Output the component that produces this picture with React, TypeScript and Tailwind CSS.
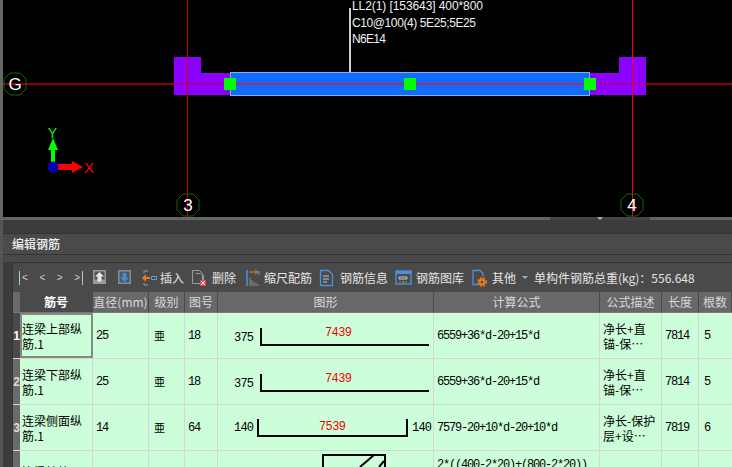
const cjk = "font-['Noto_Sans_CJK_SC',sans-serif]";
const mono = "font-['Liberation_Mono','Noto_Sans_CJK_SC',monospace] text-xs tracking-[-1.2px]";

const columns = "grid grid-cols-[7px_73px_56px_36px_33px_216px_166px_62px_37px_1fr]";

function Bubble({ x, y, label }: { x: number; y: number; label: string }) {
  return (
    <g>
      <polygon
        points={`${x - 5},${y - 11} ${x + 5},${y - 11} ${x + 11},${y - 5} ${x + 11},${y + 5} ${x + 5},${y + 11} ${x - 5},${y + 11} ${x - 11},${y + 5} ${x - 11},${y - 5}`}
        fill="none"
        stroke="#0a6a0a"
      />
      <text x={x} y={y + 6} textAnchor="middle" fill="#fff" fontSize="17" fontFamily="Liberation Sans">
        {label}
      </text>
    </g>
  );
}

function Canvas() {
  return (
    <div className="h-[217px] border-l-[3px] border-[#666] bg-black">
      <svg width="729" height="217" viewBox="3 0 729 217" className="block">
        <path d="M174 57h27v16h29v22h-56z" fill="#8c00ff" />
        <path d="M646 57h-27v16h-29v22h56z" fill="#8c00ff" />
        <rect x="230.5" y="72.5" width="359" height="23" fill="#0f6cff" stroke="#7eb0f5" />
        <line x1="3" y1="84" x2="174" y2="84" stroke="#8a0000" strokeWidth="2" />
        <line x1="646" y1="84" x2="732" y2="84" stroke="#8a0000" strokeWidth="2" />
        <line x1="174" y1="84" x2="230" y2="84" stroke="#a8009a" strokeWidth="2" />
        <line x1="590" y1="84" x2="646" y2="84" stroke="#a8009a" strokeWidth="2" />
        <line x1="230" y1="84" x2="590" y2="84" stroke="#b02a6a" strokeWidth="2" />
        <line x1="187.5" y1="0" x2="187.5" y2="217" stroke="#d00000" />
        <line x1="632.5" y1="0" x2="632.5" y2="217" stroke="#ff0000" />
        <rect x="224" y="78" width="12" height="12" fill="#00ff00" />
        <rect x="404" y="78" width="12" height="12" fill="#00ff00" />
        <rect x="584" y="78" width="12" height="12" fill="#00ff00" />
        <line x1="350" y1="8" x2="350" y2="72" stroke="#cfcfcf" strokeWidth="2" />
        <g fill="#f0f0f0" fontSize="12" fontFamily="Liberation Sans">
          <text x="352" y="10" textLength="131">LL2(1) [153643] 400*800</text>
          <text x="352" y="27" textLength="124">C10@100(4) 5E25;5E25</text>
          <text x="352" y="43" textLength="34">N6E14</text>
        </g>
        <Bubble x={15} y={84} label="G" />
        <Bubble x={188} y={205} label="3" />
        <Bubble x={632} y={205} label="4" />
        <path d="M51 162v-12h-3l5-12 5 12h-3v12z" fill="#00ff00" />
        <path d="M58 164h14v-3l11 6-11 6v-3h-14z" fill="#ff0000" />
        <circle cx="53" cy="167" r="5.5" fill="#0000b0" />
        <text x="52.5" y="138" textAnchor="middle" fill="#00ff00" fontSize="14" fontFamily="Liberation Sans">Y</text>
        <text x="89" y="173" textAnchor="middle" fill="#ff0000" fontSize="15" fontFamily="Liberation Sans">X</text>
      </svg>
    </div>
  );
}

function ToolIcon({ kind }: { kind: string }) {
  return (
    <svg width="18" height="18" viewBox="0 0 18 18" className="shrink-0">
      {kind === "up" && (
        <>
          <rect x="1" y="1" width="13" height="14" fill="#9a9a9a" />
          <rect x="2.5" y="2.5" width="10" height="8" fill="#555" />
          <path d="M7.5 3l4.5 4.5h-2.5v5h-4v-5h-2.500z" fill="#e8e8e8" />
        </>
      )}
      {kind === "down" && (
        <>
          <rect x="1" y="1" width="13" height="14" fill="#7c8ea3" />
          <rect x="2.5" y="2.500" width="10" height="11" fill="#555" />
          <path d="M7.500 13l-4.500-4.500h2.500v-4.500h4v4.500h2.500z" fill="#3f8ce0" />
        </>
      )}
      {kind === "insert" && (
        <>
          <path d="M3 2h4M3 16h4M3 2v2M3 14v2" stroke="#9a9a9a" fill="none" />
          <path d="M1 9l4-4v3h4v2h-4v3z" fill="#f07a1a" />
          <rect x="10.5" y="7.500" width="5" height="3" fill="none" stroke="#5a9be0" />
        </>
      )}
      {kind === "delete" && (
        <>
          <path d="M1.500 1.500h7l3 3v10h-10z" fill="none" stroke="#9a9a9a" />
          <path d="M4.500 4.500h5l3 2v5" fill="none" stroke="#9a9a9a" />
          <rect x="9" y="11" width="6" height="6" fill="#e04a4a" />
          <path d="M10 12l4 4M14 12l-4 4" stroke="#fff" />
        </>
      )}
      {kind === "scale" && (
        <>
          <path d="M2 1v16" stroke="#4a90e0" strokeWidth="1.500" />
          <path d="M4 3h8M10 1l3 2-3 2" stroke="#f07a1a" fill="none" />
          <path d="M14 2v4" stroke="#9a9a9a" />
          <path d="M5 9v8M7 11v6M9 13v4M11 14v3M13 15v2" stroke="#8a8a8a" />
        </>
      )}
      {kind === "info" && (
        <>
          <path d="M1.500 1.500h8l4 4v11h-12z" fill="none" stroke="#4a90e0" strokeWidth="1.300" />
          <path d="M4 7h6M4 10h6M4 13h4" stroke="#c8c8c8" />
        </>
      )}
      {kind === "library" && (
        <>
          <rect x="1" y="2" width="15" height="13" fill="none" stroke="#4a90e0" strokeWidth="1.400" />
          <rect x="1" y="2" width="15" height="3" fill="#4a90e0" />
          <path d="M4 8h8v2h-8z" fill="none" stroke="#c8c8c8" />
          <path d="M4 13h2" stroke="#e05050" />
          <path d="M7 13h2" stroke="#e0c040" />
          <path d="M10 13h2" stroke="#50c050" />
        </>
      )}
      {kind === "other" && (
        <>
          <path d="M7 1.500h-5v14h6M7 1.500h2l3 3v3" fill="none" stroke="#4a90e0" strokeWidth="1.300" />
          <circle cx="11" cy="13" r="2.500" fill="none" stroke="#f07a1a" strokeWidth="2.400" />
          <circle cx="11" cy="13" r="4.400" fill="none" stroke="#f07a1a" strokeWidth="1.200" strokeDasharray="1.800 1.800" />
        </>
      )}
    </svg>
  );
}

const tools = [
  { kind: "insert", label: "插入", className: "w-[50px] gap-[1px]" },
  { kind: "delete", label: "删除", className: "w-[54px] gap-[3px]" },
  { kind: "scale", label: "缩尺配筋", className: "w-[74px] gap-[1px]" },
  { kind: "info", label: "钢筋信息", className: "w-[76px] gap-[3px]" },
  { kind: "library", label: "钢筋图库", className: "w-[76px] gap-[3px]" },
  { kind: "other", label: "其他", className: "w-[51px] gap-[3px]" },
];

function Toolbar() {
  return (
    <div className={`flex h-[29px] items-center pl-[6px] text-xs text-[#e4e4e4] ${cjk}`}>
      <div className="flex h-[14px] w-[64px] items-center justify-between border-x border-x-[#a9c9d9] px-[2px] text-[10px] text-[#cfcfcf] font-['Liberation_Sans',sans-serif]">
        <span>&lt;</span>
        <span>&lt;</span>
        <span>&gt;</span>
        <span>&gt;</span>
      </div>
      <div className="ml-[9px] flex gap-[7px]">
        <ToolIcon kind="up" />
        <ToolIcon kind="down" />
      </div>
      <div className="ml-[6px] flex items-center">
        {tools.map((t) => (
          <div key={t.kind} className={`flex items-center ${t.className}`}>
            <ToolIcon kind={t.kind} />
            <span className="whitespace-nowrap">{t.label}</span>
          </div>
        ))}
      </div>
      <span className="mr-[6px] size-0 border-x-[3px] border-t-[3px] border-x-transparent border-t-[#aaa]" />
      <span className="whitespace-nowrap">单构件钢筋总重(kg)：556.648</span>
    </div>
  );
}

const headers = ["筋号", "直径(mm)", "级别", "图号", "图形", "计算公式", "公式描述", "长度", "根数"];

function TableHeader() {
  return (
    <div className={`${columns} h-[21px] border-b border-[#777] text-xs ${cjk}`}>
      <div className="bg-[#6a6a6a]" />
      {headers.map((h, i) => (
        <div
          key={h}
          className={`flex items-center justify-center whitespace-nowrap border-r border-[#4a4a4a] ${
            i === 0 ? "bg-[#4a4a4a] font-bold text-white" : "bg-[#686868] text-[#d8d8d8]"
          }`}
        >
          {h}
        </div>
      ))}
    </div>
  );
}

function LShape({ left, right, value }: { left: string; right?: string; value: string }) {
  const both = !!right;
  return (
    <svg width="215" height="45" viewBox="0 0 215 45" className="block">
      <g fontFamily="Liberation Mono" fontSize="12">
        <text x="16" y={both ? 26 : 28} fill="#000" textLength="20">{left}</text>
        {right && <text x="194" y="26" fill="#000" textLength="20">{right}</text>}
        <text x={both ? 101 : 107} y={both ? 25 : 23} fill="#f00000" textLength="27">{value}</text>
      </g>
      {both ? (
        <path d="M40 14v17h149v-17" fill="none" stroke="#000" strokeWidth="2" />
      ) : (
        <path d="M43 15v17h168" fill="none" stroke="#000" strokeWidth="2" />
      )}
    </svg>
  );
}

const rows = [
  { name: "连梁上部纵筋.1", d: "25", no: "18", left: "375", value: "7439", formula: "6559+36*d-20+15*d", desc: "净长+直锚-保…", len: "7814", count: "5" },
  { name: "连梁下部纵筋.1", d: "25", no: "18", left: "375", value: "7439", formula: "6559+36*d-20+15*d", desc: "净长+直锚-保…", len: "7814", count: "5" },
  { name: "连梁侧面纵筋.1", d: "14", no: "64", left: "140", right: "140", value: "7539", formula: "7579-20+10*d-20+10*d", desc: "净长-保护层+设…", len: "7819", count: "6" },
];

const cell = "flex items-center border-r border-[#d6d6d6] pl-[3px]";

function Rows() {
  return (
    <div className="text-black">
      {rows.map((r, i) => (
        <div key={r.name} className={`${columns} h-[46px] border-b border-[#d6d6d6] bg-[#ccffd9]`}>
          <div className={`flex items-center justify-center text-xs font-bold font-['Liberation_Sans',sans-serif] ${i === 0 ? "bg-[#4a4a4a] text-white" : "bg-[#6a6a6a] text-[#ddd]"}`}>
            {i + 1}
          </div>
          <div className={`flex items-center pr-[2px] text-xs leading-[15px] ${cjk} ${i === 0 ? "border-2 border-[#888] pl-0" : "border-r border-[#d6d6d6] pl-[2px]"}`}>
            {r.name}
          </div>
          <div className={`${cell} ${mono}`}>{r.d}</div>
          <div className={`${cell} pl-[5px]`}>
            <span className={`text-[11px] ${cjk}`}>亜</span>
          </div>
          <div className={`${cell} ${mono}`}>{r.no}</div>
          <div className="border-r border-[#d6d6d6]">
            <LShape left={r.left} right={r.right} value={r.value} />
          </div>
          <div className={`${cell} ${mono}`}>{r.formula}</div>
          <div className={`${cell} text-xs leading-[15px] ${cjk}`}>{r.desc}</div>
          <div className={`${cell} ${mono}`}>{r.len}</div>
          <div className={`flex items-center pl-[5px] ${mono}`}>{r.count}</div>
        </div>
      ))}
      <div className={`${columns} h-[16px] overflow-hidden bg-[#ccffd9]`}>
        <div className="bg-[#6a6a6a]" />
        <div className={`border-r border-[#d6d6d6] pl-[2px] pt-[13px] text-xs ${cjk}`}>连梁拉筋</div>
        <div className="border-r border-[#d6d6d6]" />
        <div className="border-r border-[#d6d6d6]" />
        <div className="border-r border-[#d6d6d6]" />
        <div className="border-r border-[#d6d6d6] pl-[104px] pt-[3px]">
          <svg width="64" height="13" viewBox="0 0 64 13" className="block">
            <path d="M1 13v-12h62v12M38 13l14-12M57 13l5-6" fill="none" stroke="#000" strokeWidth="2" />
          </svg>
        </div>
        <div className={`border-r border-[#d6d6d6] pl-[3px] pt-[6px] whitespace-nowrap ${mono}`}>2*((400-2*20)+(800-2*20))</div>
        <div className="border-r border-[#d6d6d6]" />
        <div className="border-r border-[#d6d6d6]" />
        <div />
      </div>
    </div>
  );
}

export default function App() {
  return (
    <div className="h-[467px] w-[732px] overflow-hidden bg-[#3c3c3c]">
      <Canvas />
      <div className="flex h-[3px] justify-end bg-[#666]">
        <div className="mr-[82px] flex h-[3px] w-[100px] justify-center bg-[#444]">
          <div className="size-0 border-x-[3px] border-t-[3px] border-x-transparent border-t-[#aaa]" />
        </div>
      </div>
      <div className="h-[247px] border-l-[3px] border-[#555] pt-[13px]">
        <div className={`flex h-[22px] items-center border-y border-[#333] bg-[#4a4a4a] pl-[9px] text-xs font-medium text-[#f0f0f0] ${cjk}`}>
          编辑钢筋
        </div>
        <div className="h-[7px] bg-[#4a4a4a]" />
        <div className="ml-[9px] h-[205px] border-l border-t border-[#333] bg-[#4a4a4a]">
          <Toolbar />
          <TableHeader />
          <Rows />
        </div>
      </div>
    </div>
  );
}
